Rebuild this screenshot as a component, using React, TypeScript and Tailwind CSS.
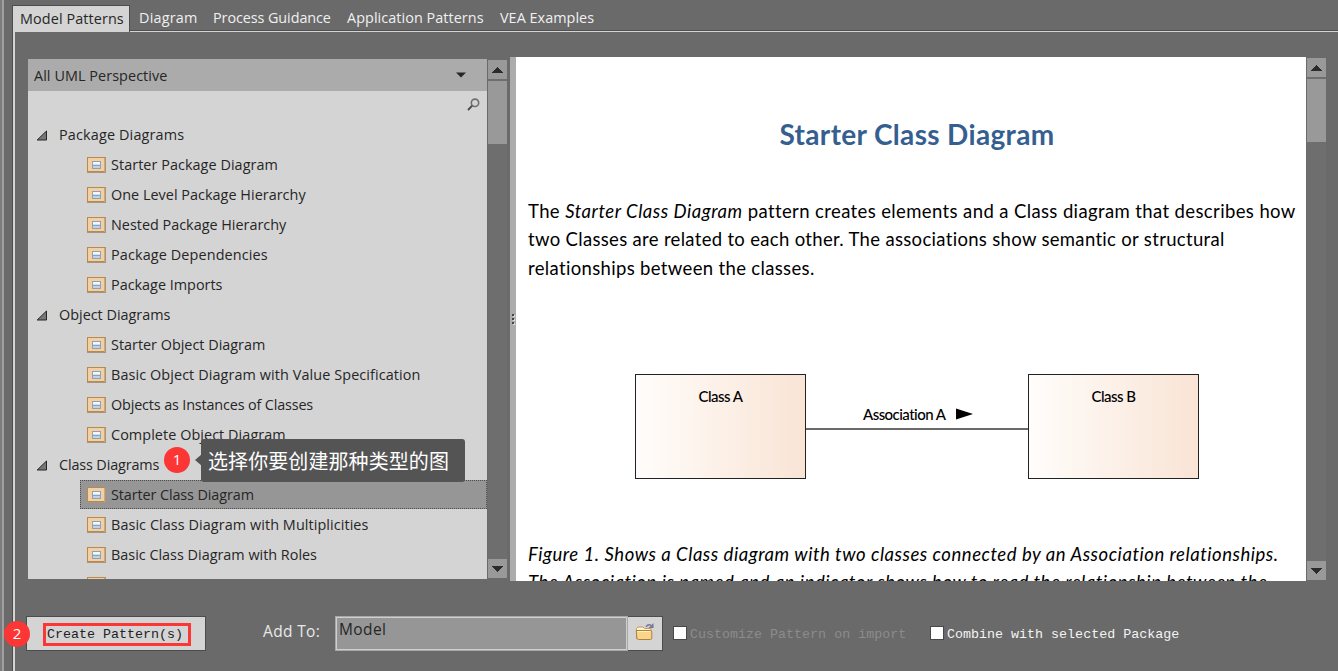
import React from "react";

type Entry = { label: string; cls?: string };
type Section = { title: Entry; items: Entry[] };

const tabs = [
  { label: "Diagram", cls: "w-[74px] tracking-[0.2px]" },
  { label: "Process Guidance", cls: "w-[134px] tracking-[-0.08px]" },
  { label: "Application Patterns", cls: "w-[153px] tracking-[0.06px]" },
  { label: "VEA Examples", cls: "w-[110px] tracking-[0.04px]" },
];

const sections: Section[] = [
  {
    title: { label: "Package Diagrams", cls: "tracking-[0.16px]" },
    items: [
      { label: "Starter Package Diagram", cls: "tracking-[0.06px]" },
      { label: "One Level Package Hierarchy", cls: "tracking-[0.03px]" },
      { label: "Nested Package Hierarchy" },
      { label: "Package Dependencies", cls: "tracking-[0.13px]" },
      { label: "Package Imports" },
    ],
  },
  {
    title: { label: "Object Diagrams" },
    items: [
      { label: "Starter Object Diagram" },
      { label: "Basic Object Diagram with Value Specification", cls: "tracking-[0.1px]" },
      { label: "Objects as Instances of Classes", cls: "tracking-[-0.15px]" },
      { label: "Complete Object Diagram", cls: "tracking-[0.07px]" },
    ],
  },
  {
    title: { label: "Class Diagrams", cls: "tracking-[-0.13px]" },
    items: [
      { label: "Starter Class Diagram", cls: "tracking-[-0.1px]" },
      { label: "Basic Class Diagram with Multiplicities", cls: "tracking-[0.08px]" },
      { label: "Basic Class Diagram with Roles" },
      { label: "" },
    ],
  },
];

const selected = "Starter Class Diagram";

function DiagramIcon() {
  return (
    <svg width="19" height="16" viewBox="0 0 19 16" className="shrink-0" shapeRendering="crispEdges">
      <rect width="19" height="16" fill="#a8957f" />
      <rect width="18" height="15" fill="#b98a4c" />
      <rect x="1" y="1" width="16" height="13" fill="#f3cfa4" />
      <rect x="17" y="1" width="1" height="14" fill="#cfa873" />
      <rect x="5" y="4" width="9" height="8" fill="#8aa3bd" />
      <rect x="6" y="5" width="7" height="3" fill="#f4f6f9" />
      <rect x="6" y="7" width="7" height="1" fill="#d5dfea" />
      <rect x="6" y="9" width="7" height="2" fill="#c3d2e2" />
    </svg>
  );
}

function ScrollButton({ down = false }: { down?: boolean }) {
  return (
    <div className="flex h-[19px] w-[19px] shrink-0 items-center justify-center bg-[#999999]">
      <svg width="11" height="6" viewBox="0 0 11 6" shapeRendering="crispEdges">
        <path d={down ? "M0 0H11L5.5 6Z" : "M0 6H11L5.5 0Z"} fill="#2b2b2b" />
      </svg>
    </div>
  );
}

function ScrollBar() {
  return (
    <div className="flex h-full w-[19px] flex-col bg-[#6e6e6e]">
      <ScrollButton />
      <div className="mt-[2px] h-[63px] bg-[#999999]" />
      <div className="flex-1" />
      <ScrollButton down />
    </div>
  );
}

function TabBar() {
  return (
    <div className="flex h-[32px] w-full pl-[12px] pt-[5px]">
      <div className="z-10 flex h-[27px] w-[118px] items-center border-l border-r border-t border-[#4d4d4d] bg-[#d4d4d4] pl-[7px] text-[#262626]">
        <span className="tracking-[0.1px]">Model Patterns</span>
      </div>
      <div className="flex h-[27px] flex-1 border-b border-[#d4d4d4]">
        <div className="flex h-[26px] flex-1 items-center border-b border-[#505050] pl-[9px] text-[#f0f0f0]">
          {tabs.map((t) => (
            <div key={t.label} className={t.cls}>
              {t.label}
            </div>
          ))}
        </div>
      </div>
    </div>
  );
}

function PatternList() {
  return (
    <div className="relative flex h-[520px] w-[459px] flex-col bg-[#d4d4d4]">
      <div className="flex h-[32px] shrink-0 items-center justify-between bg-[#ababab] pl-[6px] pr-[21px] text-[#262626]">
        <span className="pt-[2px] tracking-[0.07px]">All UML Perspective</span>
        <svg width="10" height="6" viewBox="0 0 10 6" className="-mt-px">
          <path d="M0 0.5H10L5 5.5Z" fill="#262626" />
        </svg>
      </div>
      <div className="flex h-[29px] shrink-0 justify-end pr-[7px] pt-[7px]">
        <svg width="13" height="13" viewBox="0 0 13 13" fill="none">
          <circle cx="8" cy="4.8" r="3.7" stroke="#707070" strokeWidth="1.6" />
          <path d="M5.2 7.7L1 12" stroke="#4a4a4a" strokeWidth="1.9" />
        </svg>
      </div>
      <div className="flex-1 overflow-hidden">
        {sections.map((s) => (
          <div key={s.title.label}>
            <div className="flex h-[30px] items-center pl-[8px]">
              <svg width="11" height="11" viewBox="0 0 11 11">
                <path d="M1.2 10H10.5V1Z" fill="#777777" stroke="#262626" strokeWidth="1" />
              </svg>
              <span className="ml-[12px]">
                <span className={s.title.cls}>{s.title.label}</span>
              </span>
            </div>
            {s.items.map((item) => (
              <div key={item.label} className="flex h-[30px] pl-[52px]">
                <div
                  className={
                    item.label === selected
                      ? "flex h-[29px] flex-1 items-center border border-dotted border-[#4c4c4c] bg-[#969696] pl-[6px]"
                      : "flex h-[29px] flex-1 items-center pl-[7px]"
                  }
                >
                  <DiagramIcon />
                  <span className="ml-[5px]">
                    <span className={item.cls}>{item.label}</span>
                  </span>
                </div>
              </div>
            ))}
          </div>
        ))}
      </div>
      <div className="absolute left-[136px] top-[388px] flex h-[26px] w-[26px] items-center justify-center rounded-full bg-[#fc3535] pb-[2px] text-[15px] text-white">
        1
      </div>
      <svg width="7" height="12" viewBox="0 0 7 12" className="absolute left-[167px] top-[395px]">
        <path d="M7 0V12L0 6Z" fill="#535353" />
      </svg>
      <div className="absolute left-[173px] top-[380px] flex h-[43px] w-[264px] items-center rounded-[3px] bg-[#545454] pl-[7px] font-['Noto_Sans_CJK_SC',sans-serif] text-[20px] text-white">
        <span className="whitespace-nowrap tracking-[0.08px]">选择你要创建那种类型的图</span>
      </div>
    </div>
  );
}

function ClassBox({ name }: { name: string }) {
  return (
    <div className="h-[105px] w-[171px] border border-[#222222] bg-linear-to-r from-[#fffdfb] to-[#f9e4d5] pt-[10px] text-center text-[15px] font-medium leading-[22px] tracking-[-0.5px]">
      {name}
    </div>
  );
}

function Preview() {
  return (
    <div className="h-[524px] w-[790px] overflow-hidden bg-white font-[Lato,sans-serif] text-black">
      <h1 className="pl-[12px] pt-[57px] text-center text-[28px] font-bold leading-[40px] tracking-[0.34px] text-[#365f91]">
        Starter Class Diagram
      </h1>
      <div className="mt-[43px] whitespace-nowrap pl-[12px] text-[18.5px] leading-[28.4px]">
        <div className="tracking-[0.38px]">
          The <i className="tracking-[0.53px]">Starter Class Diagram</i> pattern creates elements and a Class diagram that describes how
        </div>
        <div className="tracking-[0.32px]">two Classes are related to each other. The associations show semantic or structural</div>
        <div className="tracking-[0.34px]">relationships between the classes.</div>
      </div>
      <div className="mt-[91.8px] flex pl-[119px]">
        <ClassBox name="Class A" />
        <div className="h-[56px] w-[222px] border-b-2 border-[#6a6a6a] pt-[30px]">
          <div className="flex items-center whitespace-nowrap pl-[57px] text-[15px] font-medium leading-[20px]">
            <span className="w-[84px] tracking-[-0.55px]">Association A</span>
            <svg width="17" height="12" viewBox="0 0 17 12" className="ml-[9px]">
              <path d="M0 0.5V11.5L17 6Z" fill="#000" />
            </svg>
          </div>
        </div>
        <ClassBox name="Class B" />
      </div>
      <div className="mt-[61px] whitespace-nowrap pl-[12px] text-[18.5px] italic leading-[28px]">
        <div className="tracking-[0.53px]">Figure 1. Shows a Class diagram with two classes connected by an Association relationships.</div>
        <div className="tracking-[0.53px]">The Association is named and an indicator shows how to read the relationship between the</div>
      </div>
    </div>
  );
}

function Splitter() {
  return (
    <div className="flex h-[524px] w-[6px] flex-col items-center justify-center gap-[2px] bg-[#acacac]">
      {[0, 1, 2].map((i) => (
        <div key={i} className="h-[2px] w-[2px] bg-[#444444] shadow-[1px_1px_0_#dddddd]" />
      ))}
    </div>
  );
}

function FolderIcon() {
  return (
    <svg width="19" height="18" viewBox="0 0 19 18" fill="none" className="-mt-[3px] mr-[2px]">
      <path d="M1.5 16V5.5L3 4H8L9.5 5.5H16V8H2Z" fill="#fff3cf" stroke="#c39a5c" />
      <path d="M1.2 7.5H15Q16.8 7.5 16.8 9V15Q16.8 16.5 15.3 16.5H3.5Q2 16.5 1.9 15Z" fill="#f8d588" stroke="#b07f3c" />
      <path d="M2.5 8.5H15.5" stroke="#fff0c4" />
      <path d="M11 3.8Q13 0.8 16 2.2" stroke="#77779a" strokeWidth="1.5" />
      <path d="M18.5 0V5H13.5Z" fill="#77779a" />
    </svg>
  );
}

function CheckOption({ label, disabled = false }: { label: string; disabled?: boolean }) {
  return (
    <div className="flex h-[16px] items-center">
      <div className="mb-[2px] h-[14px] w-[14px] border border-[#484848] bg-white" />
      <span
        className={
          disabled
            ? "ml-[3px] mt-[3px] whitespace-nowrap font-['Liberation_Mono',monospace] text-[13.35px] text-[#8c8c8c]"
            : "ml-[3px] mt-[3px] whitespace-nowrap font-['Liberation_Mono',monospace] text-[13.35px] text-[#f4f4f4]"
        }
      >
        {label}
      </span>
    </div>
  );
}

function Footer() {
  return (
    <div className="flex h-[35px] items-center">
      <div className="relative flex h-[35px] w-[180px] items-center border border-[#4c4c4c] bg-[#d4d4d4] pl-[16px]">
        <div className="mt-px flex h-[23px] w-[148px] items-center whitespace-nowrap border-[3px] border-[#fc3535] pl-[1px] pt-px font-['Liberation_Mono',monospace] text-[13.33px] text-[#222222]">
          Create Pattern(s)
        </div>
        <div className="absolute left-[-23px] top-[4px] flex h-[26px] w-[26px] items-center justify-center rounded-full bg-[#fc3535] pb-[2px] text-[15px] text-white">
          2
        </div>
      </div>
      <div className="mb-[5px] ml-[57px] w-[72px] text-[15.5px] tracking-[0.35px] text-[#e8e8e8]">Add To:</div>
      <div className="h-[35px] w-[293px] border border-[#a8a8a8] bg-[#969696]">
        <div className="h-full border border-[#cfcfcf] pl-[2px] text-[15.5px] leading-[22px] tracking-[0.4px] text-[#262626]">Model</div>
      </div>
      <div className="flex h-[35px] w-[35px] items-center justify-center border-b border-r border-t border-[#4c4c4c] bg-[#d4d4d4]">
        <FolderIcon />
      </div>
      <div className="ml-[10px] w-[257px]">
        <CheckOption label="Customize Pattern on import" disabled />
      </div>
      <CheckOption label="Combine with selected Package" />
    </div>
  );
}

export default function App() {
  return (
    <div className="flex h-[671px] w-[1338px] overflow-hidden bg-[#6a6a6a] font-['Open_Sans',sans-serif] text-[14.4px] leading-[20px] text-[#262626]">
      <div className="flex w-0 shrink-0">
        <div className="h-full w-[2px] shrink-0 bg-[#7c7c7c]" />
        <div className="h-full w-[2px] shrink-0 bg-[#a0a0a0]" />
      </div>
      <div className="flex w-full flex-col">
        <TabBar />
        <div className="ml-[12px] flex-1 border-l border-[#4d4d4d]">
          <div className="h-full border-l-2 border-[#d4d4d4] pl-[11px] pt-[25px]">
            <div className="flex h-[524px] pl-[2px]">
              <div className="pt-[2px]">
                <PatternList />
              </div>
              <div className="h-[524px] w-[23px] pb-[3px] pl-[1px] pt-[3px]">
                <ScrollBar />
              </div>
              <Splitter />
              <Preview />
              <div className="h-[524px] pb-px pl-px pt-px">
                <ScrollBar />
              </div>
            </div>
            <div className="pt-[35px]">
              <Footer />
            </div>
          </div>
        </div>
      </div>
    </div>
  );
}
